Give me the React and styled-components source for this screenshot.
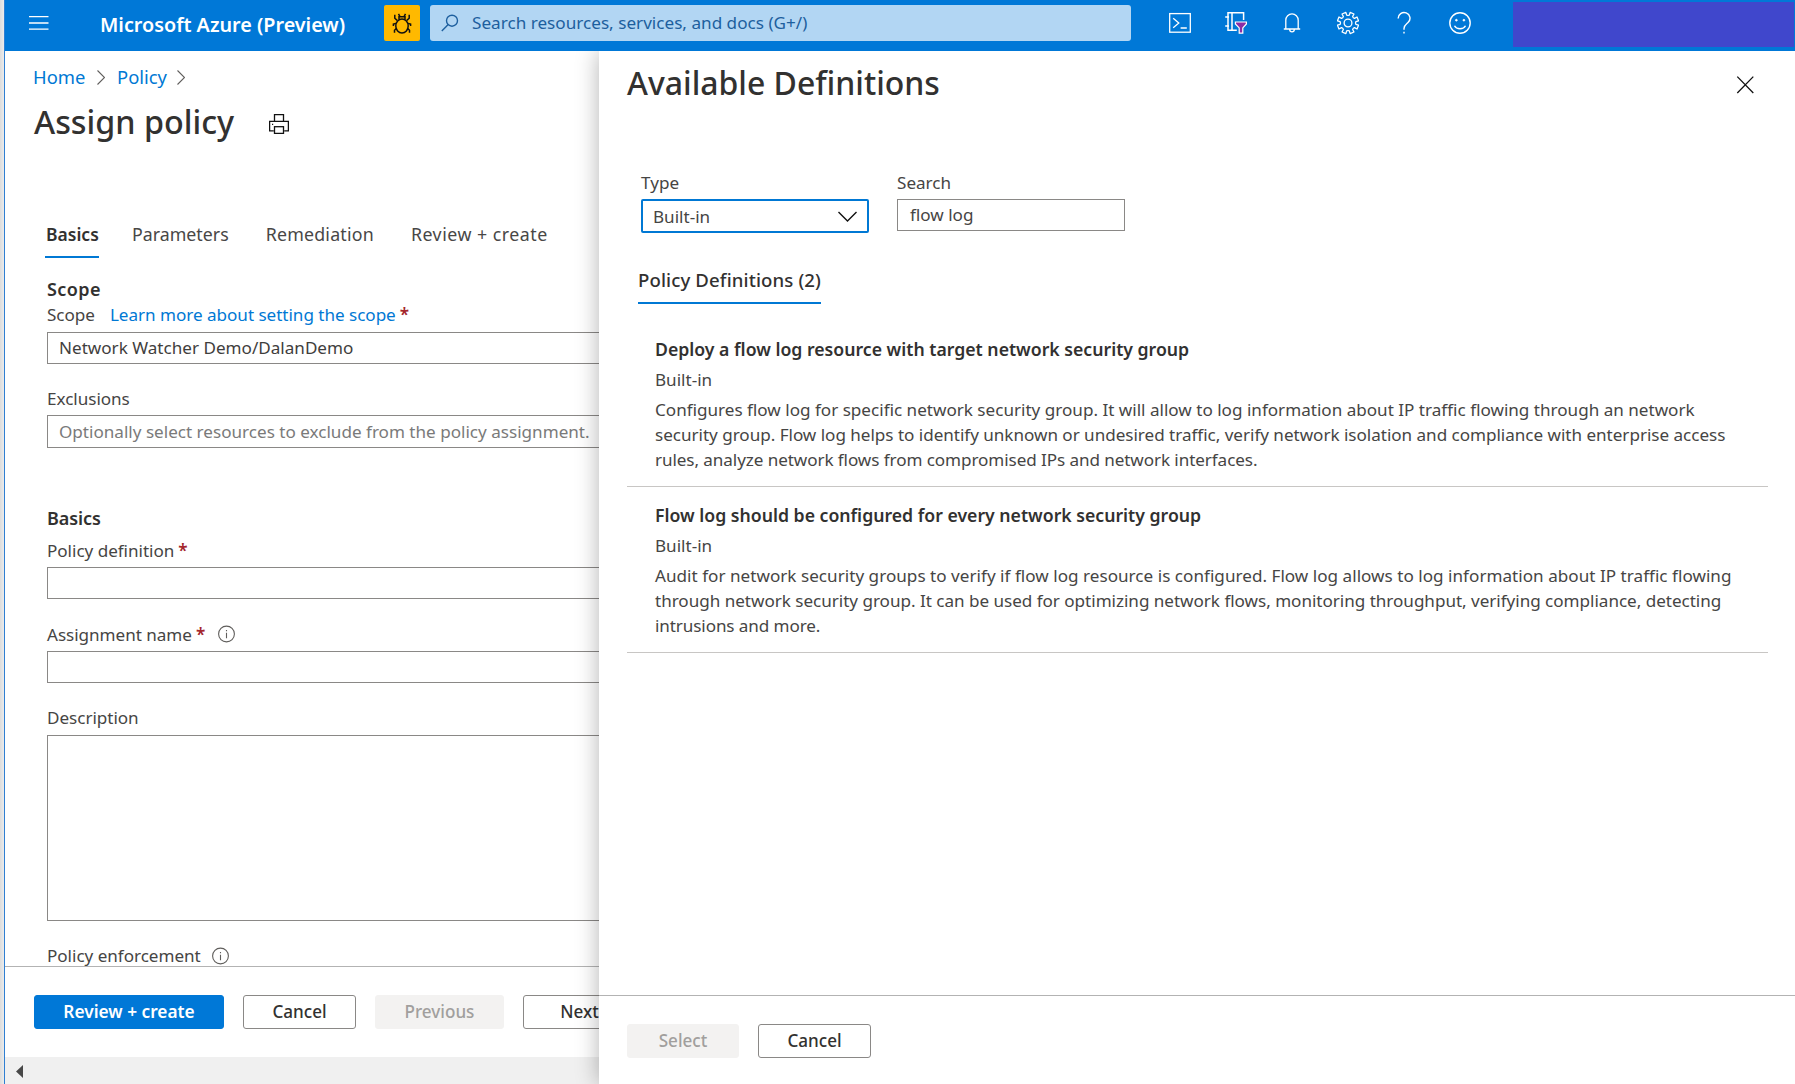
import React from "react";
import styled, { createGlobalStyle, css } from "styled-components";

const GlobalStyle = createGlobalStyle`
  *, *::before, *::after { box-sizing: border-box; }
  body {
    margin: 0;
    overflow: hidden;
    background: #fff;
    color: #323130;
    font-family: "Noto Sans", "Open Sans", sans-serif;
    font-size: 17.1px;
    line-height: 24px;
  }
  h1, h2, h3, p { margin: 0; }
  button, input, textarea { font: inherit; color: inherit; }
  svg { display: block; flex: none; }
`;

const Window = styled.div`
  display: flex;
  height: 1084px;
  width: 1795px;
  overflow: hidden;
`;

const WindowEdge = styled.div`
  flex: none;
  width: 5px;
  background: linear-gradient(90deg, #dcdcdc, #ececec);
  border-right: 1px solid #2f7fd2;
`;

const Portal = styled.div`
  flex: 1;
  min-width: 0;
  display: flex;
  flex-direction: column;
`;

/* ---------- top bar ---------- */

const TopBar = styled.header`
  flex: none;
  height: 51px;
  display: flex;
  align-items: flex-start;
  padding-left: 24px;
  background: #0078d7;
  color: #fff;
`;

const MenuButton = styled.div`
  width: 20px;
  height: 14px;
  margin: 16px 51px 0 0;
`;

const Brand = styled.div`
  width: 284px;
  padding-top: 12px;
  font-size: 19.75px;
  font-weight: 600;
  line-height: 26px;
  white-space: nowrap;
`;

const BugBadge = styled.div`
  display: flex;
  justify-content: center;
  padding-top: 8px;
  width: 36px;
  height: 36px;
  margin: 5px 10px 0 0;
  border-radius: 2px;
  background: #ffb900;
`;

const GlobalSearch = styled.div`
  display: flex;
  align-items: center;
  gap: 13px;
  width: 701px;
  height: 36px;
  margin-top: 5px;
  padding: 0 0 1px 11px;
  border-radius: 3px;
  background: #b2d6f3;
  color: #1d5f9e;
  font-size: 17.15px;
`;

const BarIcons = styled.div`
  display: grid;
  grid-template-columns: repeat(6, 56px);
  justify-items: center;
  margin: 11px 0 0 21px;
`;

const AccountBlock = styled.div`
  width: 281px;
  height: 45px;
  margin: 2px 1px 0 auto;
  background: #4047cc;
`;

/* ---------- page body ---------- */

const Body = styled.div`
  flex: 1;
  min-height: 0;
  display: flex;
  overflow: hidden;
`;

const FormPane = styled.main`
  flex: none;
  width: 594px;
  display: flex;
  flex-direction: column;
  overflow: hidden;
`;

const FormScroll = styled.div`
  height: 915px;
  flex: none;
  overflow: hidden;
  padding: 14px 0 0 29px;
`;

const Breadcrumb = styled.nav`
  display: flex;
  align-items: center;
  height: 24px;
  margin-left: -1px;
  color: #0078d4;
  font-size: 18.4px;
`;

const Crumb = styled.a`
  width: ${(p) => p.$w}px;
  white-space: nowrap;
`;

const CrumbArrow = styled.span`
  width: 8px;
  margin: 0 ${(p) => (p.$last ? 0 : 12)}px 0 11px;
`;

const TitleRow = styled.div`
  display: flex;
  align-items: flex-start;
  gap: 35px;
  margin-top: 11px;
  svg { margin-top: 14px; }
`;

const PageTitle = styled.h1`
  font-size: 32.3px;
  font-weight: 500;
  line-height: 43px;
  white-space: nowrap;
`;

const Tabs = styled.div`
  display: flex;
  margin: 79px 0 0 11px;
`;

const Tab = styled.div`
  height: 36px;
  margin-right: ${(p) => p.$gap || 0}px;
  letter-spacing: ${(p) => p.$ls || 0}px;
  font-size: 17.8px;
  white-space: nowrap;
  color: #484746;
  ${(p) =>
    p.$active &&
    css`
      width: 54px;
      padding-left: 1px;
      font-size: 17.5px;
      font-weight: 600;
      color: #323130;
      border-bottom: 2px solid #0078d4;
    `}
`;

const Form = styled.div`
  padding-left: 13px;
`;

const SectionTitle = styled.h2`
  margin-top: ${(p) => p.$top}px;
  font-size: 18px;
  font-weight: 600;
  line-height: 24px;
  letter-spacing: ${(p) => p.$ls || 0}px;
`;

const Label = styled.div`
  display: flex;
  align-items: center;
  height: 24px;
  margin: ${(p) => p.$top}px 0 ${(p) => (p.$bottom ?? 4)}px;
  color: #464544;
  letter-spacing: -0.03px;
  white-space: nowrap;
`;

const LearnMore = styled.a`
  margin-left: 15px;
  color: #0078d4;
`;

const Required = styled.span`
  margin-left: 4px;
  color: #a4262c;
  font-weight: 600;
`;

const InfoSlot = styled.span`
  margin: ${(p) => p.$shift || -2}px 0 0 ${(p) => p.$left}px;
`;

const Field = styled.div`
  width: 700px;
  height: ${(p) => p.$h || 32}px;
  padding: ${(p) => (p.$placeholder ? 4 : 3)}px 11px 0;
  border: 1px solid #8a8886;
  white-space: nowrap;
  color: ${(p) => (p.$placeholder ? "#7a7a7a" : "#3f3e3d")};
`;

const FormFooter = styled.footer`
  flex: none;
  display: flex;
  gap: 19px;
  height: 91px;
  padding: 28px 0 0 29px;
  border-top: 1px solid #b3b3b3;
`;

const Button = styled.button`
  flex: none;
  width: ${(p) => p.$w}px;
  height: 34px;
  padding: 0 0 1px;
  border: 1px solid #8a8886;
  border-radius: 3px;
  background: #fff;
  font-size: 17.1px;
  font-weight: 500;
  line-height: 24px;
  ${(p) =>
    p.$primary &&
    css`
      border-color: #0078d7;
      background: #0078d7;
      color: #fff;
      font-size: 17.3px;
      font-weight: 600;
    `}
  ${(p) =>
    p.$disabled &&
    css`
      border-color: #f3f2f1;
      background: #f3f2f1;
      color: #a19f9d;
    `}
`;

const ScrollTrack = styled.div`
  flex: 1;
  padding: 8px 0 0 11px;
  background: #f0f0f0;
`;

/* ---------- definitions panel ---------- */

const Panel = styled.aside`
  position: relative;
  flex: 1;
  min-width: 0;
  display: flex;
  flex-direction: column;
  background: #fff;
  box-shadow: 0 0 22px rgba(0, 0, 0, 0.3);
`;

const PanelHead = styled.div`
  display: flex;
  justify-content: space-between;
  padding: 10px 41px 0 28px;
  svg { margin-top: 15px; }
`;

const PanelTitle = styled.h1`
  font-size: 31.95px;
  font-weight: 500;
  line-height: 43px;
`;

const Filters = styled.div`
  display: flex;
  gap: 28px;
  margin: 67px 0 0 42px;
`;

const FilterGroup = styled.div`
  width: 228px;
`;

const FilterLabel = styled.div`
  height: 28px;
  color: #464544;
`;

const Select = styled.div`
  display: flex;
  align-items: center;
  justify-content: space-between;
  height: 34px;
  padding: 1px 10px 0;
  border: 2px solid #0078d4;
  border-radius: 2px;
  color: #464544;
`;

const SearchBox = styled.div`
  height: 32px;
  padding: 3px 12px 0;
  border: 1px solid #8a8886;
  color: #464544;
`;

const PanelTab = styled.div`
  align-self: flex-start;
  height: 36px;
  width: 183px;
  margin: 35px 0 0 39px;
  border-bottom: 2px solid #0078d4;
  font-size: 18.6px;
  font-weight: 500;
  white-space: nowrap;
  letter-spacing: 0.12px;
`;

const DefinitionList = styled.div`
  flex: 1;
  margin: 13px 27px 0 28px;
`;

const Definition = styled.article`
  height: ${(p) => p.$h || 166}px;
  padding: ${(p) => p.$pad}px 0 0 28px;
  border-bottom: 1px solid #c8c6c4;
`;

const DefinitionName = styled.h3`
  font-size: 17.67px;
  font-weight: 600;
  line-height: 24px;
`;

const DefinitionKind = styled.div`
  margin-top: 7px;
  color: #464544;
`;

const DefinitionText = styled.p`
  margin-top: 5px;
  line-height: 25px;
  color: #464544;
  white-space: nowrap;
`;

const TextLine = styled.span`
  display: block;
  letter-spacing: ${(p) => p.$ls}px;
`;

const PanelFooter = styled.footer`
  flex: none;
  display: flex;
  gap: 19px;
  height: 89px;
  padding: 28px 0 0 28px;
  border-top: 1px solid #b3b3b3;
`;

/* ---------- icons ---------- */

const Stroke = ({ w, h, children, sw = 1.3, color = "#fff" }) => (
  <svg width={w} height={h} viewBox={`0 0 ${w} ${h}`} fill="none" stroke={color} strokeWidth={sw}>
    {children}
  </svg>
);

const HamburgerIcon = () => (
  <Stroke w={20} h={14} sw={1.3}>
    <path d="M0 .7h19.5M0 7h19.5M0 13.2h19.5" />
  </Stroke>
);

const BugIcon = () => (
  <Stroke w={20} h={22} sw={1.5} color="#111">
    <ellipse cx="10" cy="13" rx="6.2" ry="7" />
    <path d="M7 6.5V3.8h6v2.7M6.5.8l1.5 2.8M13.5.8L12 3.6M2.8 1.8v3.4l2.4 2.2M17.2 1.8v3.4l-2.4 2.2M4 10.5l-2.6.6v2M16 10.5l2.6.6v2M4.3 15.5l-1.8 1.7v2.6M15.7 15.5l1.8 1.7v2.6" />
  </Stroke>
);

const MagnifierIcon = () => (
  <Stroke w={18} h={18} color="#1d5f9e" sw={1.4}>
    <circle cx="11" cy="6.7" r="5.5" />
    <path d="M7.2 10.6L.8 17" />
  </Stroke>
);

const ShellIcon = () => (
  <Stroke w={22} h={22}>
    <rect x=".7" y="2.6" width="20.6" height="18.6" />
    <path d="M4.2 7.2l5.6 4.9-5.6 4.6M11.6 17h6.2" />
  </Stroke>
);

const DirectoryIcon = () => (
  <Stroke w={22} h={23} sw={1.5}>
    <path d="M18.6 9V1.8H3v17.4h8.8M7 1.8v17.4M.2 6h3.8M.2 14.9h3.8" />
    <path d="M10.4 11h11v2l-3.6 3.9v5.3h-3.6v-5.3L10.4 13z" fill="#8a2da5" stroke="#fff" strokeWidth="1.2" />
  </Stroke>
);

const BellIcon = () => (
  <Stroke w={24} h={22}>
    <path d="M5.8 18V9.2a6.2 6.4 0 0 1 12.4 0V18M3.8 18h16.4M9.7 18.4a2.3 2.4 0 0 0 4.6 0" />
  </Stroke>
);

const teeth = Array.from({ length: 8 }, (_, i) => {
  const at = (deg, r) => {
    const a = ((i * 45 + 22.5 + deg) * Math.PI) / 180;
    return `${(11 + r * Math.cos(a)).toFixed(2)} ${(12 + r * Math.sin(a)).toFixed(2)}`;
  };
  return `${i ? "L" : "M"}${at(-13, 8)}L${at(-11, 10.8)}L${at(11, 10.8)}L${at(13, 8)}L${at(22.5, 7.5)}`;
}).join("");

const GearIcon = () => (
  <Stroke w={22} h={24}>
    <path d={`${teeth}Z`} strokeLinejoin="round" />
    <circle cx="11" cy="12" r="3.9" />
  </Stroke>
);

const HelpIcon = () => (
  <Stroke w={26} h={24} sw={1.4}>
    <path d="M7.2 7.5a5.9 5.7 0 1 1 10 3.8c-1.8 1.7-4.2 3-4.2 6.2v1.3M13 20.7v1.9" />
  </Stroke>
);

const SmileIcon = () => (
  <Stroke w={22} h={24} sw={1.4}>
    <circle cx="11" cy="12" r="10.2" />
    <path d="M5.5 14.8c2 4 9 4 11 0" />
    <circle cx="7.4" cy="9.2" r=".9" fill="#fff" strokeWidth=".8" />
    <circle cx="14.9" cy="9.2" r=".9" fill="#fff" strokeWidth=".8" />
  </Stroke>
);

const CrumbChevron = () => (
  <Stroke w={8} h={15} color="#605e5c" sw={1.1}>
    <path d="M.5.5l7 7-7 7" />
  </Stroke>
);

const PrinterIcon = () => (
  <Stroke w={20} h={20} color="#111" sw={1.3}>
    <path d="M5.5 7.4V.7h9v6.7M4.8 16.8H.6V7.4h18.8v9.4h-4.2" />
    <rect x="5.5" y="12.7" width="9" height="6.7" />
    <path d="M3 10.3h1.2" />
  </Stroke>
);

const InfoIcon = () => (
  <Stroke w={17} h={18} color="#605e5c" sw={1.1}>
    <circle cx="8.5" cy="9" r="7.9" />
    <path d="M8.5 7.8v5.4M8.5 4.9v1.4" />
  </Stroke>
);

const SelectChevron = () => (
  <Stroke w={19} h={11} color="#111" sw={1.4}>
    <path d="M.5 1l9 9 9-9" />
  </Stroke>
);

const CloseIcon = () => (
  <Stroke w={18} h={18} color="#111" sw={1.3}>
    <path d="M1.3.6l16 16.4M17.3.6L1.3 17" />
  </Stroke>
);

const ScrollArrow = () => (
  <svg width="7" height="13" viewBox="0 0 7 13">
    <path d="M7 0v13L0 6.5z" fill="#484848" />
  </svg>
);

const definitions = [
  {
    name: "Deploy a flow log resource with target network security group",
    lines: [
      ["Configures flow log for specific network security group. It will allow to log information about IP traffic flowing through an network", 0],
      ["security group. Flow log helps to identify unknown or undesired traffic, verify network isolation and compliance with enterprise access", -0.026],
      ["rules, analyze network flows from compromised IPs and network interfaces.", -0.08],
    ],
    pad: 20,
    h: 170,
  },
  {
    name: "Flow log should be configured for every network security group",
    lines: [
      ["Audit for network security groups to verify if flow log resource is configured. Flow log allows to log information about IP traffic flowing", 0.025],
      ["through network security group. It can be used for optimizing network flows, monitoring throughput, verifying compliance, detecting", -0.026],
      ["intrusions and more.", -0.1],
    ],
    pad: 16,
    h: 166,
  },
];

export default function App() {
  return (
    <Window>
      <GlobalStyle />
      <WindowEdge />
      <Portal>
        <TopBar>
          <MenuButton><HamburgerIcon /></MenuButton>
          <Brand>Microsoft Azure (Preview)</Brand>
          <BugBadge><BugIcon /></BugBadge>
          <GlobalSearch>
            <MagnifierIcon />
            Search resources, services, and docs (G+/)
          </GlobalSearch>
          <BarIcons>
            <ShellIcon />
            <DirectoryIcon />
            <BellIcon />
            <GearIcon />
            <HelpIcon />
            <SmileIcon />
          </BarIcons>
          <AccountBlock />
        </TopBar>
        <Body>
          <FormPane>
            <FormScroll>
              <Breadcrumb>
                <Crumb $w={53}>Home</Crumb>
                <CrumbArrow><CrumbChevron /></CrumbArrow>
                <Crumb $w={49}>Policy</Crumb>
                <CrumbArrow $last><CrumbChevron /></CrumbArrow>
              </Breadcrumb>
              <TitleRow>
                <PageTitle>Assign policy</PageTitle>
                <PrinterIcon />
              </TitleRow>
              <Tabs>
                <Tab $active $gap={33}>Basics</Tab>
                <Tab $gap={37}>Parameters</Tab>
                <Tab $gap={37} $ls={0.2}>Remediation</Tab>
                <Tab $ls={0.5}>Review + create</Tab>
              </Tabs>
              <Form>
                <SectionTitle $top={19} $ls={0.4}>Scope</SectionTitle>
                <Label $top={2} $bottom={5}>
                  Scope
                  <LearnMore>Learn more about setting the scope</LearnMore>
                  <Required>*</Required>
                </Label>
                <Field>Network Watcher Demo/DalanDemo</Field>
                <Label $top={23}>Exclusions</Label>
                <Field $h={33} $placeholder>
                  Optionally select resources to exclude from the policy assignment.
                </Field>
                <SectionTitle $top={58} $ls={-0.1}>Basics</SectionTitle>
                <Label $top={9}>
                  Policy definition<Required>*</Required>
                </Label>
                <Field />
                <Label $top={24}>
                  Assignment name<Required>*</Required>
                  <InfoSlot $left={13}><InfoIcon /></InfoSlot>
                </Label>
                <Field />
                <Label $top={23} $bottom={5}>Description</Label>
                <Field $h={186} />
                <Label $top={23}>
                  Policy enforcement
                  <InfoSlot $left={11} $shift={-1}><InfoIcon /></InfoSlot>
                </Label>
              </Form>
            </FormScroll>
            <FormFooter>
              <Button $w={190} $primary>Review + create</Button>
              <Button $w={113}>Cancel</Button>
              <Button $w={129} $disabled>Previous</Button>
              <Button $w={113}>Next</Button>
            </FormFooter>
            <ScrollTrack><ScrollArrow /></ScrollTrack>
          </FormPane>
          <Panel>
            <PanelHead>
              <PanelTitle>Available Definitions</PanelTitle>
              <CloseIcon />
            </PanelHead>
            <Filters>
              <FilterGroup>
                <FilterLabel>Type</FilterLabel>
                <Select>Built-in<SelectChevron /></Select>
              </FilterGroup>
              <FilterGroup>
                <FilterLabel>Search</FilterLabel>
                <SearchBox>flow log</SearchBox>
              </FilterGroup>
            </Filters>
            <PanelTab>Policy Definitions (2)</PanelTab>
            <DefinitionList>
              {definitions.map((d) => (
                <Definition key={d.name} $pad={d.pad} $h={d.h}>
                  <DefinitionName>{d.name}</DefinitionName>
                  <DefinitionKind>Built-in</DefinitionKind>
                  <DefinitionText>
                    {d.lines.map(([line, spacing]) => (
                      <TextLine key={line} $ls={spacing}>{line}</TextLine>
                    ))}
                  </DefinitionText>
                </Definition>
              ))}
            </DefinitionList>
            <PanelFooter>
              <Button $w={112} $disabled>Select</Button>
              <Button $w={113}>Cancel</Button>
            </PanelFooter>
          </Panel>
        </Body>
      </Portal>
    </Window>
  );
}
